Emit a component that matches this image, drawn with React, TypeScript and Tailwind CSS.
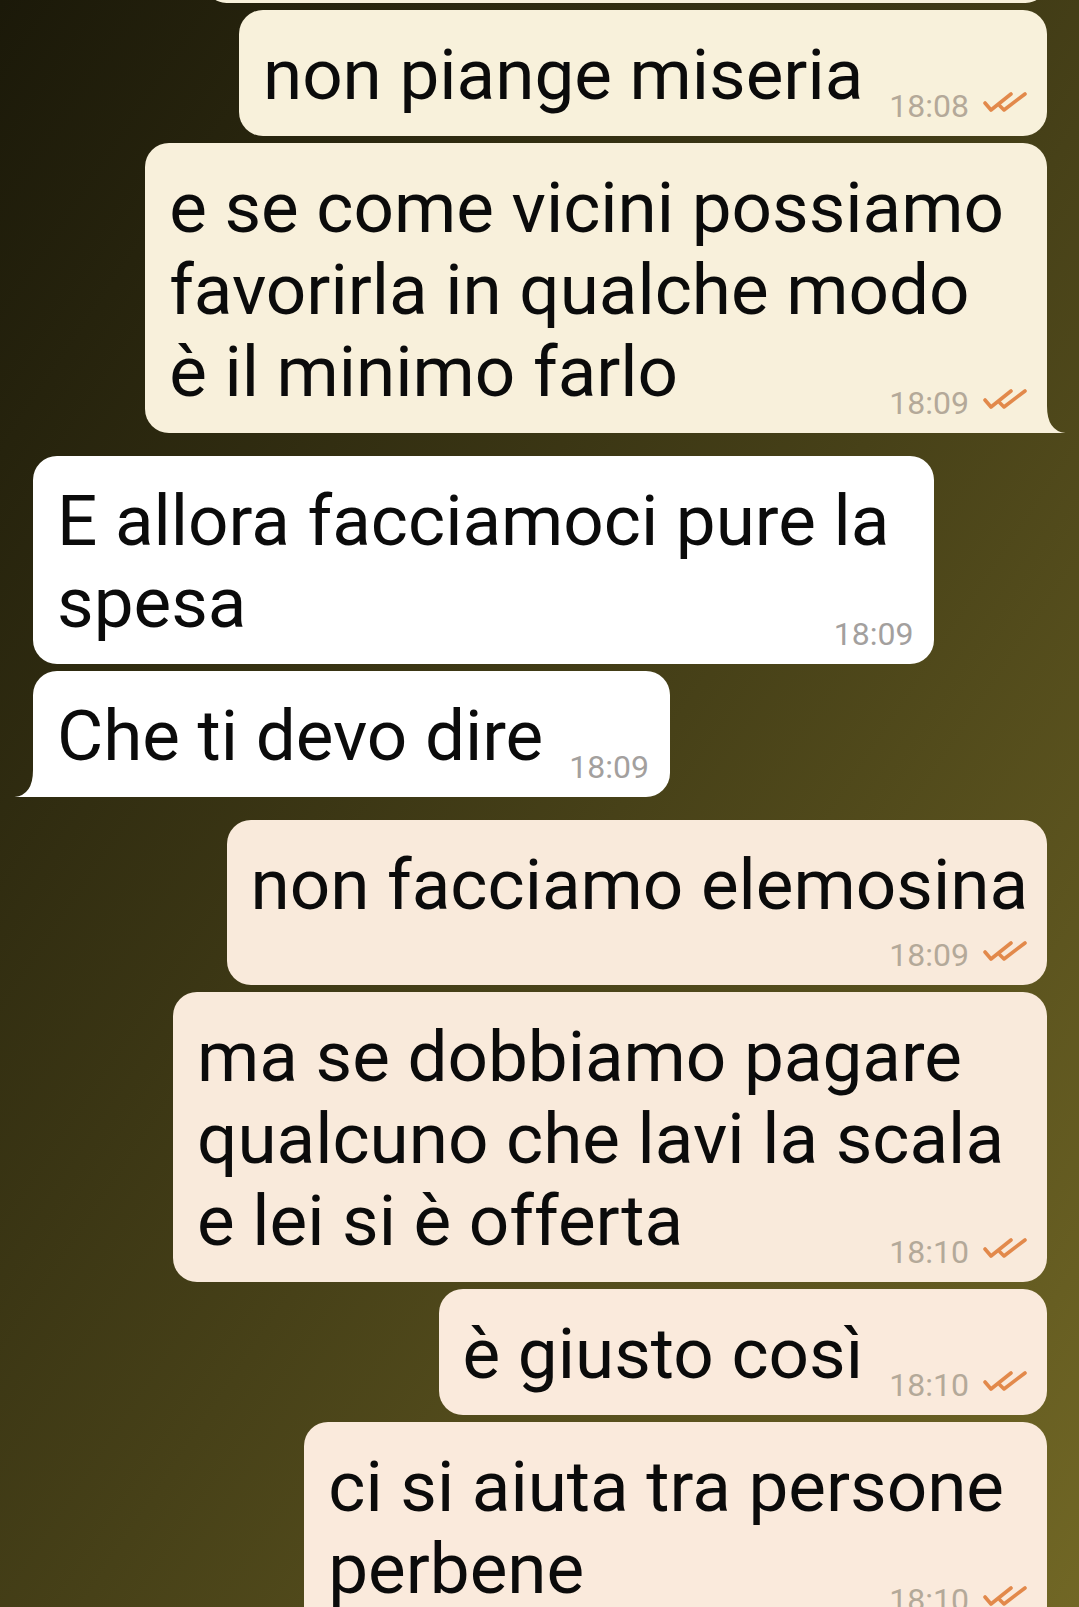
import clsx from 'clsx';

type Message = {
  out: boolean;
  lines: string[];
  time: string;
  tail?: boolean;
  timeRow?: boolean;
  first?: boolean;
  bg: string;
};

// chat as seen on screen, line breaks as in the reference
const messages: Message[] = [
  { out: true, lines: ['non piange miseria'], time: '18:08', bg: 'bg-[#f8f1db]' },
  {
    out: true,
    lines: ['e se come vicini possiamo', 'favorirla in qualche modo', 'è il minimo farlo'],
    time: '18:09',
    tail: true,
    bg: 'bg-[#f8f0db]',
  },
  {
    out: false,
    first: true,
    lines: ['E allora facciamoci pure la', 'spesa'],
    time: '18:09',
    bg: 'bg-white',
  },
  { out: false, lines: ['Che ti devo dire'], time: '18:09', tail: true, bg: 'bg-white' },
  {
    out: true,
    first: true,
    lines: ['non facciamo elemosina'],
    time: '18:09',
    timeRow: true,
    bg: 'bg-[#f9eadb]',
  },
  {
    out: true,
    lines: ['ma se dobbiamo pagare', 'qualcuno che lavi la scala', 'e lei si è offerta'],
    time: '18:10',
    bg: 'bg-[#f9eadb]',
  },
  { out: true, lines: ['è giusto così'], time: '18:10', bg: 'bg-[#faeadc]' },
  { out: true, lines: ['ci si aiuta tra persone', 'perbene'], time: '18:10', bg: 'bg-[#faeadc]' },
];

const Ticks = () => (
  <svg width="46" height="20" viewBox="0 0 46 20" className="mb-[13px] shrink-0" fill="none">
    <path d="M3 11 L9 18 L29 2" stroke="#e2894b" strokeWidth="3.6" strokeLinecap="round" strokeLinejoin="round" />
    <path d="M18 14 L22 18 L43 2" stroke="#e2894b" strokeWidth="3.6" strokeLinecap="round" strokeLinejoin="round" />
  </svg>
);

const Meta = ({ m }: { m: Message }) => (
  <div className="flex items-end gap-[13px]">
    <span
      className={clsx(
        'text-[32px] leading-[38px] whitespace-nowrap',
        m.out ? 'text-[#b4a999]' : 'text-[#a3a09e]'
      )}
    >
      {m.time}
    </span>
    {m.out && <Ticks />}
  </div>
);

const Tail = ({ out, color }: { out: boolean; color: string }) =>
  out ? (
    <svg width="20" height="27" viewBox="0 0 20 27" className="absolute bottom-0 right-[-19px]">
      <path d="M0 0 H1 Q1 25 19.5 27 H0 Z" fill={color} />
    </svg>
  ) : (
    <svg width="20" height="27" viewBox="0 0 20 27" className="absolute bottom-0 left-[-19px]">
      <path d="M20 0 H19 Q19 25 0.5 27 H20 Z" fill={color} />
    </svg>
  );

const Bubble = ({ m }: { m: Message }) => {
  const multi = m.lines.length > 1;
  const last = m.lines[m.lines.length - 1];
  const tailColor = m.out ? '#f8f0db' : '#ffffff';

  return (
    <div
      className={clsx(
        'flex',
        m.out ? 'justify-end pr-[32px]' : 'justify-start pl-[33px]',
        m.first ? 'mt-[23px]' : 'mt-[7px]'
      )}
    >
      <div
        className={clsx(
          'relative flex flex-col rounded-[24px] pl-[24px] pt-[24px] pb-[11px]',
          m.out ? 'pr-[19px]' : 'pr-[21px]',
          m.bg,
          m.tail && m.out && 'rounded-br-none',
          m.tail && !m.out && 'rounded-bl-none'
        )}
      >
        {m.lines.slice(0, -1).map((line) => (
          <div key={line} className="leading-[82px] whitespace-nowrap pr-[24px]">
            {line}
          </div>
        ))}
        {m.timeRow ? (
          <>
            <div className="leading-[82px] whitespace-nowrap">{last}</div>
            <div className="mt-[10px] flex justify-end">
              <Meta m={m} />
            </div>
          </>
        ) : (
          <div className="flex items-end">
            <span className={clsx('mb-[9px] leading-[82px] whitespace-nowrap', multi && 'pr-[24px]')}>
              {last}
            </span>
            <div className="ml-auto pl-[26px]">
              <Meta m={m} />
            </div>
          </div>
        )}
        {m.tail && <Tail out={m.out} color={tailColor} />}
      </div>
    </div>
  );
};

export default function App() {
  return (
    <div className="h-[1607px] w-full overflow-hidden bg-linear-to-br from-[#1b1909] to-[#716725] font-['Roboto','Noto_Sans',sans-serif] text-[71px] text-[#0b0b0b]">
      {/* bottom of the previous bubble, cut by the top of the screen */}
      <div className="flex justify-end pr-[32px]">
        <div className="-mt-[40px] h-[43px] w-[842px] rounded-[24px] bg-[#f8f1db]" />
      </div>
      {messages.map((m, i) => (
        <Bubble key={i} m={m} />
      ))}
    </div>
  );
}
